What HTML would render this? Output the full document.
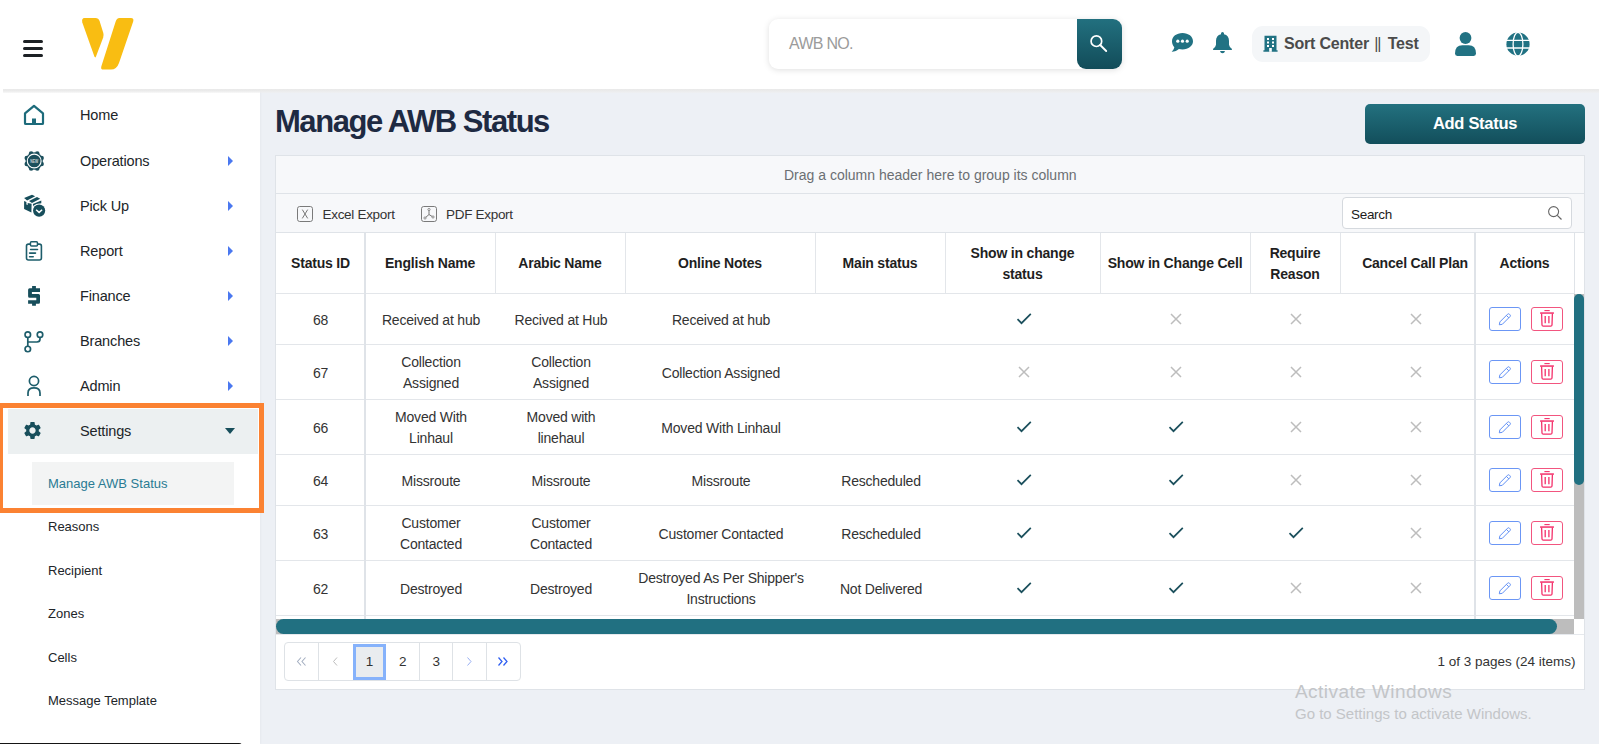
<!DOCTYPE html>
<html><head><meta charset="utf-8">
<style>
*{box-sizing:border-box;margin:0;padding:0}
html,body{width:1599px;height:744px;overflow:hidden}
body{position:relative;background:#edf0f5;font-family:"Liberation Sans",sans-serif;color:#212529}
.abs{position:absolute}
#hdr{position:absolute;left:0;top:0;width:1599px;height:89px;background:#fff;z-index:3}
#side{position:absolute;left:0;top:89px;width:260px;height:655px;background:#fff;box-shadow:1px 0 2px rgba(0,0,0,.03);z-index:2}
.mi{position:absolute;left:0;width:260px;height:45px}
.mi .ic{position:absolute;left:24px;top:12px;width:21px;height:21px}
.mi .tx{position:absolute;left:80px;top:0;line-height:45px;font-size:15px;color:#212529;letter-spacing:-0.2px}
.mi .car{position:absolute;left:228px;top:18px;width:0;height:0;border-top:4.75px solid transparent;border-bottom:4.75px solid transparent;border-left:5px solid #4a78f0}
.sub{position:absolute;left:48px;font-size:13px;color:#212529;letter-spacing:-0.1px}
.t{position:absolute;line-height:1;white-space:nowrap}
.mt{left:80px;font-size:14.5px;letter-spacing:-0.15px;color:#212529}
.st{left:48px;font-size:13px;color:#212529}
.car{position:absolute;left:228px;width:0;height:0;border-top:5px solid transparent;border-bottom:5px solid transparent;border-left:5.5px solid #4a78f0}
.gp{font-size:14px;color:#6b6f73}
.tb{font-size:13.5px;color:#333;letter-spacing:-0.3px}
.hl{left:276px;width:1298px;height:1px;background:#e3e6ea}
.cell{position:absolute;display:flex;align-items:center;justify-content:center;text-align:center;font-size:14px;line-height:21px;padding-top:2px;letter-spacing:-0.2px;color:#333}
.th{font-weight:700;color:#1f1f1f;padding-top:1px}
.td{padding-left:2px}
.ic{padding-top:0;padding-left:2px}
.ebtn,.dbtn{width:32px;height:24px;border:1px solid #6b96f5;border-radius:3px;display:flex;align-items:center;justify-content:center;background:#fff}
.dbtn{border-color:#f2557f}
.pg{font-size:13.5px;color:#333}
</style></head>
<body>
<div id="hdr">
  <!-- hamburger -->
  <div class="abs" style="left:23px;top:40px;width:20px;height:3px;background:#1d2125;border-radius:2px"></div>
  <div class="abs" style="left:23px;top:47px;width:20px;height:3px;background:#1d2125;border-radius:2px"></div>
  <div class="abs" style="left:23px;top:54px;width:20px;height:3px;background:#1d2125;border-radius:2px"></div>
  <!-- logo -->
  <svg class="abs" style="left:78px;top:14px" width="60" height="60" viewBox="78 14 60 60">
    <path d="M84.5 18 L95.5 18 Q98.5 18 99.6 21 L103.3 33 Q103.9 35.3 103.2 37.5 L96 56.5 Q95.2 58.2 94.4 56.6 L82.3 22.5 Q81.4 18 84.5 18 Z" fill="#f9bd12"/>
    <path d="M119.5 18 L131 18 Q134.2 18 133.2 21.6 L119 63 Q116.6 69.6 111 69.6 L103.5 69.6 Q100.5 69.6 101.3 66.4 L115.6 21.8 Q116.6 18 119.5 18 Z" fill="#f9bd12"/>
  </svg>
  <!-- search -->
  <div class="abs" style="left:769px;top:19px;width:353px;height:50px;background:#fff;border-radius:9px;box-shadow:0 1px 6px rgba(0,0,0,.13)"></div>
  <div class="t" style="left:789px;top:36.2px;font-size:16px;color:#9b9b9b;letter-spacing:-0.7px">AWB NO.</div>
  <div class="abs" style="left:1077px;top:19px;width:45px;height:50px;border-radius:0 9px 9px 9px;background:linear-gradient(#22707f,#124c59)"></div>
  <svg class="abs" style="left:1088px;top:34px" width="21" height="20" viewBox="0 0 21 20">
    <circle cx="8.4" cy="7.2" r="5.3" fill="none" stroke="#fff" stroke-width="1.7"/>
    <path d="M12.2 11 L18.2 17" stroke="#fff" stroke-width="1.9" stroke-linecap="round"/>
  </svg>
  <!-- chat -->
  <svg class="abs" style="left:1171px;top:32px" width="23" height="21" viewBox="0 0 23 21">
    <path d="M11.5 1 C17.5 1 22 4.6 22 9.2 C22 13.8 17.5 17.4 11.5 17.4 C10.2 17.4 9 17.2 7.9 16.9 C6.3 18.3 3.7 19.6 0.6 19.7 C2 18.5 3 16.8 3.3 15.2 C1.9 13.6 1 11.5 1 9.2 C1 4.6 5.5 1 11.5 1 Z" fill="#217283"/>
    <circle cx="6.8" cy="9.2" r="1.6" fill="#fff"/><circle cx="11.5" cy="9.2" r="1.6" fill="#fff"/><circle cx="16.2" cy="9.2" r="1.6" fill="#fff"/>
  </svg>
  <!-- bell -->
  <svg class="abs" style="left:1212px;top:31px" width="21" height="23" viewBox="0 0 21 23">
    <path d="M10.5 1 Q12 1 12 2.6 L12 3.2 Q17 4.3 17 10 L17 13.8 Q17.3 16 19.8 17.8 Q20.5 18.6 19.5 19 L1.5 19 Q0.5 18.6 1.2 17.8 Q3.7 16 4 13.8 L4 10 Q4 4.3 9 3.2 L9 2.6 Q9 1 10.5 1 Z" fill="#217283"/>
    <path d="M8 20 Q8.5 22.2 10.5 22.2 Q12.5 22.2 13 20 Z" fill="#217283"/>
  </svg>
  <!-- pill -->
  <div class="abs" style="left:1252px;top:26px;width:178px;height:36px;border-radius:11px;background:#f4f6f8"></div>
  <svg class="abs" style="left:1263px;top:35px" width="15" height="17" viewBox="0 0 15 17">
    <path d="M1.5 0.8 H13.5 V15.3 H14.6 V16.8 H0.4 V15.3 H1.5 Z" fill="#217283"/>
    <g fill="#fff"><rect x="4" y="3" width="2" height="2"/><rect x="9" y="3" width="2" height="2"/><rect x="4" y="6.5" width="2" height="2"/><rect x="9" y="6.5" width="2" height="2"/><rect x="4" y="10" width="2" height="2"/><rect x="9" y="10" width="2" height="2"/><rect x="6.2" y="13" width="2.6" height="3.8"/></g>
  </svg>
  <div class="t" style="left:1284px;top:35.5px;font-size:16px;font-weight:700;color:#4b4b4b;letter-spacing:-0.2px">Sort Center <span style="font-weight:400;letter-spacing:-1px;margin:0 3px 0 1px">||</span> Test</div>
  <!-- user -->
  <svg class="abs" style="left:1454px;top:31px" width="23" height="26" viewBox="0 0 23 26">
    <circle cx="11.5" cy="7" r="5.9" fill="#217283"/>
    <path d="M1 22.6 Q1 14.3 8.3 14.3 L14.7 14.3 Q22 14.3 22 22.6 Q22 24.9 19.7 24.9 L3.3 24.9 Q1 24.9 1 22.6 Z" fill="#217283"/>
  </svg>
  <!-- globe -->
  <svg class="abs" style="left:1505px;top:31px" width="26" height="26" viewBox="0 0 26 26">
    <circle cx="13" cy="13.15" r="11.6" fill="#217283"/>
    <g fill="none" stroke="#fff" stroke-width="1.3">
      <ellipse cx="13" cy="13.15" rx="4.9" ry="11.8"/>
      <path d="M0 9.3 H26 M0 17 H26"/>
    </g>
  </svg>
</div>
<div id="side"></div>
<div id="sidec" style="position:absolute;left:0;top:0;z-index:4">
  <!-- settings highlight & submenu bg -->
  <div class="abs" style="left:8px;top:409px;width:250px;height:45px;background:#ecf0f1"></div>
  <div class="abs" style="left:32px;top:462px;width:202px;height:43px;background:#f3f4f4"></div>
  <div class="abs" style="left:-2px;top:403px;width:266px;height:110px;border:5px solid #fb8232"></div>
  <!-- texts -->
  <div class="t mt" style="top:107.73px">Home</div>
  <div class="t mt" style="top:153.73px">Operations</div>
  <div class="t mt" style="top:198.73px">Pick Up</div>
  <div class="t mt" style="top:243.73px">Report</div>
  <div class="t mt" style="top:288.73px">Finance</div>
  <div class="t mt" style="top:333.73px">Branches</div>
  <div class="t mt" style="top:378.73px">Admin</div>
  <div class="t mt" style="top:423.73px">Settings</div>
  <div class="car" style="top:156.1px"></div>
  <div class="car" style="top:201.1px"></div>
  <div class="car" style="top:246.1px"></div>
  <div class="car" style="top:291.1px"></div>
  <div class="car" style="top:336.1px"></div>
  <div class="car" style="top:381.1px"></div>
  <div class="abs" style="left:224.5px;top:428.4px;width:0;height:0;border-left:5.25px solid transparent;border-right:5.25px solid transparent;border-top:6px solid #174e5b"></div>
  <div class="t st" style="top:477px;color:#2a7b93">Manage AWB Status</div>
  <div class="t st" style="top:520px">Reasons</div>
  <div class="t st" style="top:564px">Recipient</div>
  <div class="t st" style="top:607px">Zones</div>
  <div class="t st" style="top:650.5px">Cells</div>
  <div class="t st" style="top:694px">Message Template</div>
  <div class="abs" style="left:0;top:743px;width:242px;height:3px;background:#151515;border-radius:0 3px 0 0"></div>
  <!-- icons -->
  <svg class="abs" style="left:23px;top:104px" width="22" height="22" viewBox="0 0 22 22">
    <path d="M2 9.3 L11 1.8 L20 9.3 V19.2 Q20 20 19.2 20 H2.8 Q2 20 2 19.2 Z" fill="none" stroke="#1d6b7b" stroke-width="2.2" stroke-linejoin="round"/>
    <rect x="9" y="14.5" width="4" height="5.5" fill="#1d6b7b"/>
  </svg>
  <svg class="abs" style="left:23px;top:150px" width="22" height="22" viewBox="0 0 22 22">
    <g fill="#1b4f5c"><circle cx="11.2" cy="11" r="8.7"/><circle cx="18.59" cy="14.06" r="2.3"/><circle cx="14.26" cy="18.39" r="2.3"/><circle cx="8.14" cy="18.39" r="2.3"/><circle cx="3.81" cy="14.06" r="2.3"/><circle cx="3.81" cy="7.94" r="2.3"/><circle cx="8.14" cy="3.61" r="2.3"/><circle cx="14.26" cy="3.61" r="2.3"/><circle cx="18.59" cy="7.94" r="2.3"/></g>
    <circle cx="11.2" cy="11" r="6.9" fill="none" stroke="#fff" stroke-width="1.1"/>
    <text x="11.2" y="12.7" font-size="5" font-weight="700" text-anchor="middle" fill="#c9d3d6" font-family="Liberation Sans" textLength="8" lengthAdjust="spacingAndGlyphs">NEW</text>
  </svg>
  <svg class="abs" style="left:20px;top:190px" width="30" height="32" viewBox="20 190 30 32">
    <path d="M24.1 198 L32 194.7 L35.2 196.3 L27.1 200.6 Z M29 201.1 L37 197.1 L40.2 198.7 L32 203 Z M32.9 204 L41.3 200.4 L41.3 203.2 L33.3 206.3 Z M24.1 201 L26.4 202 L26.4 204.6 L27.7 205 L27.7 202.9 L31.6 203.8 L31.4 212.4 L24.1 208.9 Z" fill="#174e5b"/>
    <circle cx="39.1" cy="210.6" r="7.2" fill="#fff"/>
    <circle cx="39.1" cy="210.6" r="6.1" fill="#174e5b"/>
    <path d="M36.1 209.8 L39.1 212.4 L42.1 209.8" fill="none" stroke="#fff" stroke-width="1.5"/>
  </svg>
  <svg class="abs" style="left:24px;top:239px" width="20" height="24" viewBox="0 0 20 24">
    <rect x="2.5" y="5.1" width="14.9" height="15.9" rx="2" fill="none" stroke="#1d5d6b" stroke-width="1.6"/>
    <rect x="6.45" y="2.75" width="7" height="4.2" rx="1" fill="#fff" stroke="#1d5d6b" stroke-width="1.5"/>
    <path d="M6.6 10.5 H13.5 M5.6 14.1 H11.5 M5.6 17.8 H9.2" stroke="#1d5d6b" stroke-width="1.6" stroke-linecap="round"/>
  </svg>
  <svg class="abs" style="left:20px;top:280px" width="30" height="30" viewBox="20 280 30 30"><path d="M32.1 286 H35.9 V288.3 H40 V291.9 H31.9 V293.9 H38.5 Q40 293.9 40 295.4 V302.3 Q40 303.8 38.5 303.8 H35.9 V305.8 H32.1 V303.8 H28.1 V300.2 H36.3 V297.7 H29.6 Q28.1 297.7 28.1 296.2 V289.8 Q28.1 288.3 29.6 288.3 H32.1 Z" fill="#174e5b"/></svg>
  <svg class="abs" style="left:24px;top:330.7px" width="20" height="22" viewBox="0 0 20 22">
    <circle cx="3.8" cy="3.7" r="2.75" fill="none" stroke="#1d5d6b" stroke-width="1.7"/>
    <circle cx="16" cy="3.7" r="2.75" fill="none" stroke="#1d5d6b" stroke-width="1.7"/>
    <circle cx="3.8" cy="18" r="2.75" fill="none" stroke="#1d5d6b" stroke-width="1.7"/>
    <path d="M3.8 6.3 V15.4 M16 6.3 V8 Q16 11 13 11 H3.8" fill="none" stroke="#1d5d6b" stroke-width="1.7"/>
  </svg>
  <svg class="abs" style="left:26px;top:375px" width="16" height="22" viewBox="0 0 16 22">
    <circle cx="8" cy="6" r="4.6" fill="none" stroke="#1d5d6b" stroke-width="1.7"/>
    <path d="M2 21 V18 Q2 12.9 8 12.9 Q14 12.9 14 18 V21" fill="none" stroke="#1d5d6b" stroke-width="1.7"/>
  </svg>
  <svg class="abs" style="left:21.7px;top:420.3px" width="21" height="21" viewBox="0 0 24 24">
    <path fill="#174e5b" d="M19.14 12.94c.04-.3.06-.61.06-.94 0-.32-.02-.64-.07-.94l2.03-1.58c.18-.14.23-.41.12-.61l-1.92-3.32c-.12-.22-.37-.29-.59-.22l-2.39.96c-.5-.38-1.03-.7-1.62-.94l-.36-2.54c-.04-.24-.24-.41-.48-.41h-3.84c-.24 0-.43.17-.47.41l-.36 2.54c-.59.24-1.13.57-1.62.94l-2.39-.96c-.22-.08-.47 0-.59.22L2.74 8.87c-.12.21-.08.47.12.61l2.03 1.58c-.05.3-.09.63-.09.94s.02.64.07.94l-2.030 1.58c-.18.14-.23.41-.12.61l1.92 3.32c.12.22.37.29.59.22l2.39-.96c.5.38 1.03.7 1.62.94l.36 2.54c.05.24.24.41.48.41h3.84c.24 0 .44-.17.47-.41l.36-2.54c.59-.24 1.13-.56 1.62-.94l2.39.96c.22.08.47 0 .59-.22l1.92-3.32c.12-.22.07-.47-.12-.61l-2.01-1.58zM12 15.6c-1.98 0-3.6-1.62-3.6-3.6s1.62-3.6 3.6-3.6 3.6 1.62 3.6 3.6-1.62 3.6-3.6 3.6z"/>
  </svg>
</div>
<!-- main -->
<div class="abs" style="left:3px;top:89px;width:1596px;height:4px;background:linear-gradient(#e9e9e9,#ebebeb 45%,rgba(240,240,240,.45));z-index:5"></div>
<div class="t" style="left:275px;top:105.5px;font-size:31px;font-weight:700;color:#1e2a42;letter-spacing:-1.45px">Manage AWB Status</div>
<div class="abs" style="left:1365px;top:104px;width:220px;height:40px;border-radius:5px;background:linear-gradient(#23717f,#124e5b)"></div>
<div class="t" style="left:1365px;top:115.1px;width:220px;text-align:center;font-size:16.5px;font-weight:700;color:#fff;letter-spacing:-0.3px">Add Status</div>
<div class="abs" style="left:275px;top:155px;width:1310px;height:535px;background:#fff;border:1px solid #dfe3e8"></div>
<div class="abs" style="left:276px;top:156px;width:1308px;height:76px;background:#f7f8fa"></div>
<div class="abs" style="left:276px;top:193px;width:1308px;height:1px;background:#dfe3e8"></div>
<div class="abs" style="left:276px;top:232px;width:1308px;height:1px;background:#dfe3e8"></div>
<div class="t gp" style="left:784px;top:168.2px">Drag a column header here to group its column</div>
<svg class="abs" style="left:297px;top:206px" width="16" height="16" viewBox="0 0 16 16"><rect x="0.5" y="0.5" width="15" height="15" rx="2.2" fill="none" stroke="#7a7a7a" stroke-width="1"/><path d="M5.3 3.6 L10.7 12.4 M10.7 3.6 L5.3 12.4" stroke="#777" stroke-width="1"/></svg>
<div class="t tb" style="left:322.5px;top:207.55px">Excel Export</div>
<svg class="abs" style="left:421px;top:206px" width="16" height="16" viewBox="0 0 16 16"><rect x="0.5" y="0.5" width="15" height="15" rx="2.2" fill="none" stroke="#7a7a7a" stroke-width="1"/><path d="M8 3.5 L8 8.5 L4 12 M8 8.5 L12 11" fill="none" stroke="#777" stroke-width="1"/><circle cx="8" cy="3.5" r="1.1" fill="#fff" stroke="#777" stroke-width=".8"/><circle cx="4" cy="12" r="1.1" fill="#fff" stroke="#777" stroke-width=".8"/><circle cx="12" cy="11" r="1.1" fill="#fff" stroke="#777" stroke-width=".8"/></svg>
<div class="t tb" style="left:446px;top:207.55px">PDF Export</div>
<div class="abs" style="left:1342px;top:197px;width:230px;height:32px;background:#fff;border:1px solid #d5d9de;border-radius:4px"></div>
<div class="t" style="left:1351px;top:207.6px;font-size:13.5px;letter-spacing:-0.3px;color:#1c1c1c">Search</div>
<svg class="abs" style="left:1547px;top:205px" width="16" height="16" viewBox="0 0 16 16"><circle cx="6.6" cy="6.6" r="5" fill="none" stroke="#666" stroke-width="1.1"/><path d="M10.3 10.3 L14.5 14.5" stroke="#666" stroke-width="1.2"/></svg>
<div class="abs hl" style="top:293px"></div>
<div class="abs hl" style="top:344px"></div>
<div class="abs hl" style="top:399px"></div>
<div class="abs hl" style="top:454px"></div>
<div class="abs hl" style="top:505px"></div>
<div class="abs hl" style="top:560px"></div>
<div class="abs hl" style="top:615px"></div>
<div class="abs" style="left:364px;top:233px;width:2px;height:386px;background:#dfe3e8"></div>
<div class="abs" style="left:495px;top:233px;width:1px;height:60px;background:#e3e6ea"></div>
<div class="abs" style="left:625px;top:233px;width:1px;height:60px;background:#e3e6ea"></div>
<div class="abs" style="left:815px;top:233px;width:1px;height:60px;background:#e3e6ea"></div>
<div class="abs" style="left:945px;top:233px;width:1px;height:60px;background:#e3e6ea"></div>
<div class="abs" style="left:1100px;top:233px;width:1px;height:60px;background:#e3e6ea"></div>
<div class="abs" style="left:1250px;top:233px;width:1px;height:60px;background:#e3e6ea"></div>
<div class="abs" style="left:1340px;top:233px;width:1px;height:60px;background:#e3e6ea"></div>
<div class="abs" style="left:1474px;top:233px;width:2px;height:386px;background:#dfe3e8"></div>
<div class="abs" style="left:1574px;top:233px;width:1px;height:61px;background:#dfe3e8"></div>
<div class="cell th" style="left:276px;top:233px;width:89px;height:60px">Status ID</div>
<div class="cell th" style="left:365px;top:233px;width:130px;height:60px">English Name</div>
<div class="cell th" style="left:495px;top:233px;width:130px;height:60px">Arabic Name</div>
<div class="cell th" style="left:625px;top:233px;width:190px;height:60px">Online Notes</div>
<div class="cell th" style="left:815px;top:233px;width:130px;height:60px">Main status</div>
<div class="cell th" style="left:945px;top:233px;width:155px;height:60px">Show in change<br>status</div>
<div class="cell th" style="left:1100px;top:233px;width:150px;height:60px">Show in Change Cell</div>
<div class="cell th" style="left:1250px;top:233px;width:90px;height:60px">Require<br>Reason</div>
<div class="cell th" style="left:1340px;top:233px;width:150px;height:60px">Cancel Call Plan</div>
<div class="cell th" style="left:1475px;top:233px;width:99px;height:60px">Actions</div>
<div class="cell td" style="left:276px;top:294px;width:89px;height:50px;padding-left:0">68</div>
<div class="cell td" style="left:365px;top:294px;width:130px;height:50px">Received at hub</div>
<div class="cell td" style="left:495px;top:294px;width:130px;height:50px">Recived at Hub</div>
<div class="cell td" style="left:625px;top:294px;width:190px;height:50px">Received at hub</div>
<div class="cell td" style="left:815px;top:294px;width:130px;height:50px"></div>
<div class="cell ic" style="left:945px;top:294px;width:155px;height:50px"><svg width="16" height="12" viewBox="0 0 16 12"><path d="M1.5 6.2 L5.5 10.2 L14.8 0.9" fill="none" stroke="#1b4f5c" stroke-width="1.7"/></svg></div>
<div class="cell ic" style="left:1100px;top:294px;width:150px;height:50px"><svg width="12" height="12" viewBox="0 0 12 12"><path d="M1 1 L11 11 M11 1 L1 11" fill="none" stroke="#bdbdbd" stroke-width="1.5"/></svg></div>
<div class="cell ic" style="left:1250px;top:294px;width:90px;height:50px"><svg width="12" height="12" viewBox="0 0 12 12"><path d="M1 1 L11 11 M11 1 L1 11" fill="none" stroke="#bdbdbd" stroke-width="1.5"/></svg></div>
<div class="cell ic" style="left:1340px;top:294px;width:150px;height:50px"><svg width="12" height="12" viewBox="0 0 12 12"><path d="M1 1 L11 11 M11 1 L1 11" fill="none" stroke="#bdbdbd" stroke-width="1.5"/></svg></div>
<div class="abs ebtn" style="left:1489px;top:307.0px"><svg width="14" height="14" viewBox="0 0 14 14"><path d="M1.3 12.8 L1.9 9.9 L9.6 2.2 Q10.5 1.3 11.4 2.2 L12 2.8 Q12.9 3.7 12 4.6 L4.3 12.3 Z M8.4 3.4 L10.8 5.8" fill="none" stroke="#5f8ff5" stroke-width="1"/></svg></div>
<div class="abs dbtn" style="left:1531px;top:307.0px"><svg style="position:absolute;left:7px;top:0.5px" width="16" height="20" viewBox="0 -1 16 20"><path d="M1.1 3.05 H14.9" fill="none" stroke="#f4306a" stroke-width="1.5"/><path d="M5.4 0.6 H10.7" fill="none" stroke="#f4306a" stroke-width="1.1"/><path d="M2.6 3.5 L3 15 Q3.1 16.2 4.3 16.2 H11.7 Q12.9 16.2 13 15 L13.4 3.5 M6.2 6 V13.3 M9.9 6 V13.3" fill="none" stroke="#f4306a" stroke-width="1.3"/></svg></div>
<div class="cell td" style="left:276px;top:345px;width:89px;height:54px;padding-left:0">67</div>
<div class="cell td" style="left:365px;top:345px;width:130px;height:54px">Collection<br>Assigned</div>
<div class="cell td" style="left:495px;top:345px;width:130px;height:54px">Collection<br>Assigned</div>
<div class="cell td" style="left:625px;top:345px;width:190px;height:54px">Collection Assigned</div>
<div class="cell td" style="left:815px;top:345px;width:130px;height:54px"></div>
<div class="cell ic" style="left:945px;top:345px;width:155px;height:54px"><svg width="12" height="12" viewBox="0 0 12 12"><path d="M1 1 L11 11 M11 1 L1 11" fill="none" stroke="#bdbdbd" stroke-width="1.5"/></svg></div>
<div class="cell ic" style="left:1100px;top:345px;width:150px;height:54px"><svg width="12" height="12" viewBox="0 0 12 12"><path d="M1 1 L11 11 M11 1 L1 11" fill="none" stroke="#bdbdbd" stroke-width="1.5"/></svg></div>
<div class="cell ic" style="left:1250px;top:345px;width:90px;height:54px"><svg width="12" height="12" viewBox="0 0 12 12"><path d="M1 1 L11 11 M11 1 L1 11" fill="none" stroke="#bdbdbd" stroke-width="1.5"/></svg></div>
<div class="cell ic" style="left:1340px;top:345px;width:150px;height:54px"><svg width="12" height="12" viewBox="0 0 12 12"><path d="M1 1 L11 11 M11 1 L1 11" fill="none" stroke="#bdbdbd" stroke-width="1.5"/></svg></div>
<div class="abs ebtn" style="left:1489px;top:360.0px"><svg width="14" height="14" viewBox="0 0 14 14"><path d="M1.3 12.8 L1.9 9.9 L9.6 2.2 Q10.5 1.3 11.4 2.2 L12 2.8 Q12.9 3.7 12 4.6 L4.3 12.3 Z M8.4 3.4 L10.8 5.8" fill="none" stroke="#5f8ff5" stroke-width="1"/></svg></div>
<div class="abs dbtn" style="left:1531px;top:360.0px"><svg style="position:absolute;left:7px;top:0.5px" width="16" height="20" viewBox="0 -1 16 20"><path d="M1.1 3.05 H14.9" fill="none" stroke="#f4306a" stroke-width="1.5"/><path d="M5.4 0.6 H10.7" fill="none" stroke="#f4306a" stroke-width="1.1"/><path d="M2.6 3.5 L3 15 Q3.1 16.2 4.3 16.2 H11.7 Q12.9 16.2 13 15 L13.4 3.5 M6.2 6 V13.3 M9.9 6 V13.3" fill="none" stroke="#f4306a" stroke-width="1.3"/></svg></div>
<div class="cell td" style="left:276px;top:400px;width:89px;height:54px;padding-left:0">66</div>
<div class="cell td" style="left:365px;top:400px;width:130px;height:54px">Moved With<br>Linhaul</div>
<div class="cell td" style="left:495px;top:400px;width:130px;height:54px">Moved with<br>linehaul</div>
<div class="cell td" style="left:625px;top:400px;width:190px;height:54px">Moved With Linhaul</div>
<div class="cell td" style="left:815px;top:400px;width:130px;height:54px"></div>
<div class="cell ic" style="left:945px;top:400px;width:155px;height:54px"><svg width="16" height="12" viewBox="0 0 16 12"><path d="M1.5 6.2 L5.5 10.2 L14.8 0.9" fill="none" stroke="#1b4f5c" stroke-width="1.7"/></svg></div>
<div class="cell ic" style="left:1100px;top:400px;width:150px;height:54px"><svg width="16" height="12" viewBox="0 0 16 12"><path d="M1.5 6.2 L5.5 10.2 L14.8 0.9" fill="none" stroke="#1b4f5c" stroke-width="1.7"/></svg></div>
<div class="cell ic" style="left:1250px;top:400px;width:90px;height:54px"><svg width="12" height="12" viewBox="0 0 12 12"><path d="M1 1 L11 11 M11 1 L1 11" fill="none" stroke="#bdbdbd" stroke-width="1.5"/></svg></div>
<div class="cell ic" style="left:1340px;top:400px;width:150px;height:54px"><svg width="12" height="12" viewBox="0 0 12 12"><path d="M1 1 L11 11 M11 1 L1 11" fill="none" stroke="#bdbdbd" stroke-width="1.5"/></svg></div>
<div class="abs ebtn" style="left:1489px;top:415.0px"><svg width="14" height="14" viewBox="0 0 14 14"><path d="M1.3 12.8 L1.9 9.9 L9.6 2.2 Q10.5 1.3 11.4 2.2 L12 2.8 Q12.9 3.7 12 4.6 L4.3 12.3 Z M8.4 3.4 L10.8 5.8" fill="none" stroke="#5f8ff5" stroke-width="1"/></svg></div>
<div class="abs dbtn" style="left:1531px;top:415.0px"><svg style="position:absolute;left:7px;top:0.5px" width="16" height="20" viewBox="0 -1 16 20"><path d="M1.1 3.05 H14.9" fill="none" stroke="#f4306a" stroke-width="1.5"/><path d="M5.4 0.6 H10.7" fill="none" stroke="#f4306a" stroke-width="1.1"/><path d="M2.6 3.5 L3 15 Q3.1 16.2 4.3 16.2 H11.7 Q12.9 16.2 13 15 L13.4 3.5 M6.2 6 V13.3 M9.9 6 V13.3" fill="none" stroke="#f4306a" stroke-width="1.3"/></svg></div>
<div class="cell td" style="left:276px;top:455px;width:89px;height:50px;padding-left:0">64</div>
<div class="cell td" style="left:365px;top:455px;width:130px;height:50px">Missroute</div>
<div class="cell td" style="left:495px;top:455px;width:130px;height:50px">Missroute</div>
<div class="cell td" style="left:625px;top:455px;width:190px;height:50px">Missroute</div>
<div class="cell td" style="left:815px;top:455px;width:130px;height:50px">Rescheduled</div>
<div class="cell ic" style="left:945px;top:455px;width:155px;height:50px"><svg width="16" height="12" viewBox="0 0 16 12"><path d="M1.5 6.2 L5.5 10.2 L14.8 0.9" fill="none" stroke="#1b4f5c" stroke-width="1.7"/></svg></div>
<div class="cell ic" style="left:1100px;top:455px;width:150px;height:50px"><svg width="16" height="12" viewBox="0 0 16 12"><path d="M1.5 6.2 L5.5 10.2 L14.8 0.9" fill="none" stroke="#1b4f5c" stroke-width="1.7"/></svg></div>
<div class="cell ic" style="left:1250px;top:455px;width:90px;height:50px"><svg width="12" height="12" viewBox="0 0 12 12"><path d="M1 1 L11 11 M11 1 L1 11" fill="none" stroke="#bdbdbd" stroke-width="1.5"/></svg></div>
<div class="cell ic" style="left:1340px;top:455px;width:150px;height:50px"><svg width="12" height="12" viewBox="0 0 12 12"><path d="M1 1 L11 11 M11 1 L1 11" fill="none" stroke="#bdbdbd" stroke-width="1.5"/></svg></div>
<div class="abs ebtn" style="left:1489px;top:468.0px"><svg width="14" height="14" viewBox="0 0 14 14"><path d="M1.3 12.8 L1.9 9.9 L9.6 2.2 Q10.5 1.3 11.4 2.2 L12 2.8 Q12.9 3.7 12 4.6 L4.3 12.3 Z M8.4 3.4 L10.8 5.8" fill="none" stroke="#5f8ff5" stroke-width="1"/></svg></div>
<div class="abs dbtn" style="left:1531px;top:468.0px"><svg style="position:absolute;left:7px;top:0.5px" width="16" height="20" viewBox="0 -1 16 20"><path d="M1.1 3.05 H14.9" fill="none" stroke="#f4306a" stroke-width="1.5"/><path d="M5.4 0.6 H10.7" fill="none" stroke="#f4306a" stroke-width="1.1"/><path d="M2.6 3.5 L3 15 Q3.1 16.2 4.3 16.2 H11.7 Q12.9 16.2 13 15 L13.4 3.5 M6.2 6 V13.3 M9.9 6 V13.3" fill="none" stroke="#f4306a" stroke-width="1.3"/></svg></div>
<div class="cell td" style="left:276px;top:506px;width:89px;height:54px;padding-left:0">63</div>
<div class="cell td" style="left:365px;top:506px;width:130px;height:54px">Customer<br>Contacted</div>
<div class="cell td" style="left:495px;top:506px;width:130px;height:54px">Customer<br>Contacted</div>
<div class="cell td" style="left:625px;top:506px;width:190px;height:54px">Customer Contacted</div>
<div class="cell td" style="left:815px;top:506px;width:130px;height:54px">Rescheduled</div>
<div class="cell ic" style="left:945px;top:506px;width:155px;height:54px"><svg width="16" height="12" viewBox="0 0 16 12"><path d="M1.5 6.2 L5.5 10.2 L14.8 0.9" fill="none" stroke="#1b4f5c" stroke-width="1.7"/></svg></div>
<div class="cell ic" style="left:1100px;top:506px;width:150px;height:54px"><svg width="16" height="12" viewBox="0 0 16 12"><path d="M1.5 6.2 L5.5 10.2 L14.8 0.9" fill="none" stroke="#1b4f5c" stroke-width="1.7"/></svg></div>
<div class="cell ic" style="left:1250px;top:506px;width:90px;height:54px"><svg width="16" height="12" viewBox="0 0 16 12"><path d="M1.5 6.2 L5.5 10.2 L14.8 0.9" fill="none" stroke="#1b4f5c" stroke-width="1.7"/></svg></div>
<div class="cell ic" style="left:1340px;top:506px;width:150px;height:54px"><svg width="12" height="12" viewBox="0 0 12 12"><path d="M1 1 L11 11 M11 1 L1 11" fill="none" stroke="#bdbdbd" stroke-width="1.5"/></svg></div>
<div class="abs ebtn" style="left:1489px;top:521.0px"><svg width="14" height="14" viewBox="0 0 14 14"><path d="M1.3 12.8 L1.9 9.9 L9.6 2.2 Q10.5 1.3 11.4 2.2 L12 2.8 Q12.9 3.7 12 4.6 L4.3 12.3 Z M8.4 3.4 L10.8 5.8" fill="none" stroke="#5f8ff5" stroke-width="1"/></svg></div>
<div class="abs dbtn" style="left:1531px;top:521.0px"><svg style="position:absolute;left:7px;top:0.5px" width="16" height="20" viewBox="0 -1 16 20"><path d="M1.1 3.05 H14.9" fill="none" stroke="#f4306a" stroke-width="1.5"/><path d="M5.4 0.6 H10.7" fill="none" stroke="#f4306a" stroke-width="1.1"/><path d="M2.6 3.5 L3 15 Q3.1 16.2 4.3 16.2 H11.7 Q12.9 16.2 13 15 L13.4 3.5 M6.2 6 V13.3 M9.9 6 V13.3" fill="none" stroke="#f4306a" stroke-width="1.3"/></svg></div>
<div class="cell td" style="left:276px;top:561px;width:89px;height:54px;padding-left:0">62</div>
<div class="cell td" style="left:365px;top:561px;width:130px;height:54px">Destroyed</div>
<div class="cell td" style="left:495px;top:561px;width:130px;height:54px">Destroyed</div>
<div class="cell td" style="left:625px;top:561px;width:190px;height:54px">Destroyed As Per Shipper's<br>Instructions</div>
<div class="cell td" style="left:815px;top:561px;width:130px;height:54px">Not Delivered</div>
<div class="cell ic" style="left:945px;top:561px;width:155px;height:54px"><svg width="16" height="12" viewBox="0 0 16 12"><path d="M1.5 6.2 L5.5 10.2 L14.8 0.9" fill="none" stroke="#1b4f5c" stroke-width="1.7"/></svg></div>
<div class="cell ic" style="left:1100px;top:561px;width:150px;height:54px"><svg width="16" height="12" viewBox="0 0 16 12"><path d="M1.5 6.2 L5.5 10.2 L14.8 0.9" fill="none" stroke="#1b4f5c" stroke-width="1.7"/></svg></div>
<div class="cell ic" style="left:1250px;top:561px;width:90px;height:54px"><svg width="12" height="12" viewBox="0 0 12 12"><path d="M1 1 L11 11 M11 1 L1 11" fill="none" stroke="#bdbdbd" stroke-width="1.5"/></svg></div>
<div class="cell ic" style="left:1340px;top:561px;width:150px;height:54px"><svg width="12" height="12" viewBox="0 0 12 12"><path d="M1 1 L11 11 M11 1 L1 11" fill="none" stroke="#bdbdbd" stroke-width="1.5"/></svg></div>
<div class="abs ebtn" style="left:1489px;top:576.0px"><svg width="14" height="14" viewBox="0 0 14 14"><path d="M1.3 12.8 L1.9 9.9 L9.6 2.2 Q10.5 1.3 11.4 2.2 L12 2.8 Q12.9 3.7 12 4.6 L4.3 12.3 Z M8.4 3.4 L10.8 5.8" fill="none" stroke="#5f8ff5" stroke-width="1"/></svg></div>
<div class="abs dbtn" style="left:1531px;top:576.0px"><svg style="position:absolute;left:7px;top:0.5px" width="16" height="20" viewBox="0 -1 16 20"><path d="M1.1 3.05 H14.9" fill="none" stroke="#f4306a" stroke-width="1.5"/><path d="M5.4 0.6 H10.7" fill="none" stroke="#f4306a" stroke-width="1.1"/><path d="M2.6 3.5 L3 15 Q3.1 16.2 4.3 16.2 H11.7 Q12.9 16.2 13 15 L13.4 3.5 M6.2 6 V13.3 M9.9 6 V13.3" fill="none" stroke="#f4306a" stroke-width="1.3"/></svg></div>
<div class="abs" style="left:276px;top:619px;width:1298px;height:15px;background:#bdbdbd"></div>
<div class="abs" style="left:276px;top:619px;width:1281px;height:15px;background:#217081;border-radius:8px"></div>
<div class="abs" style="left:1574px;top:294px;width:10px;height:325px;background:#bdbdbd"></div>
<div class="abs" style="left:1574px;top:294px;width:10px;height:191px;background:#217081;border-radius:5px"></div>
<div class="abs" style="left:276px;top:634px;width:1308px;height:1px;background:#e6e9ed"></div>
<div class="abs" style="left:284px;top:642px;width:237px;height:39px;border:1px solid #dee2e6;border-radius:4px;background:#fff"></div>
<div class="abs" style="left:318px;top:643px;width:1px;height:37px;background:#dee2e6"></div>
<div class="abs" style="left:452px;top:643px;width:1px;height:37px;background:#dee2e6"></div>
<div class="abs" style="left:486px;top:643px;width:1px;height:37px;background:#dee2e6"></div>
<div class="abs" style="left:419px;top:643px;width:1px;height:37px;background:#dee2e6"></div>
<div class="abs" style="left:353px;top:644px;width:33px;height:36px;border:3px solid #86b2fb;background:#e9ecef"></div>
<div class="t pg" style="left:352.7px;top:654.6px;width:33.7px;text-align:center">1</div>
<div class="t pg" style="left:386px;top:654.6px;width:33.5px;text-align:center">2</div>
<div class="t pg" style="left:419.5px;top:654.6px;width:33.5px;text-align:center">3</div>
<svg class="abs" style="left:296px;top:656px" width="11" height="11" viewBox="0 0 11 11"><path d="M5 1.5 L1.5 5.5 L5 9.5 M9.5 1.5 L6 5.5 L9.5 9.5" fill="none" stroke="#a3aec0" stroke-width="1.05"/></svg>
<svg class="abs" style="left:332px;top:656px" width="7" height="11" viewBox="0 0 7 11"><path d="M5 1.5 L1.5 5.5 L5 9.5" fill="none" stroke="#bdbdbd" stroke-width="1"/></svg>
<svg class="abs" style="left:466px;top:656px" width="7" height="11" viewBox="0 0 7 11"><path d="M1.5 1.5 L5 5.5 L1.5 9.5" fill="none" stroke="#98aff3" stroke-width="1"/></svg>
<svg class="abs" style="left:497px;top:656px" width="12" height="11" viewBox="0 0 12 11"><path d="M1.5 1.5 L5 5.5 L1.5 9.5 M6.5 1.5 L10 5.5 L6.5 9.5" fill="none" stroke="#2f5ff2" stroke-width="1.25"/></svg>
<div class="t" style="left:1437.5px;top:654.7px;font-size:13.5px;color:#333;letter-spacing:0px">1 of 3 pages (24 items)</div>
<div class="t" style="left:1295px;top:681.7px;font-size:19px;color:#c3c5c8;letter-spacing:0.45px">Activate Windows</div>
<div class="t" style="left:1295px;top:706.3px;font-size:15px;color:#c3c5c8">Go to Settings to activate Windows.</div>
</body></html>
